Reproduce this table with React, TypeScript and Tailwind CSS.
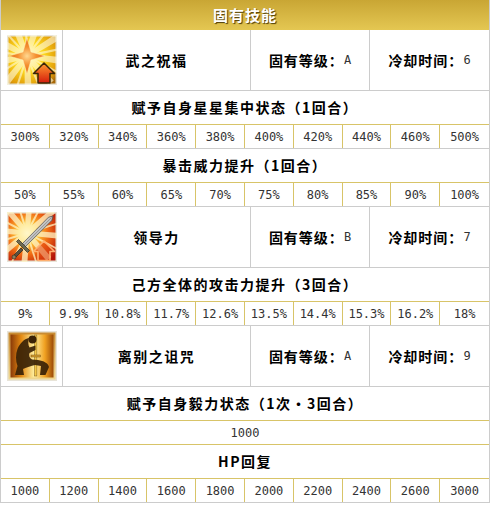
import React from "react";

const cjk = "font-['Noto_Sans_CJK_SC',sans-serif]";
const mono = "font-['DejaVu_Sans_Mono',monospace]";

function StarIcon() {
  const rays = Array.from({ length: 18 }, (_, i) => i * 20);
  return (
    <svg width="50" height="50" viewBox="0 0 50 50">
      <defs>
        <radialGradient id="s1bg" cx="0.42" cy="0.42" r="0.75">
          <stop offset="0" stopColor="#fff6b0" />
          <stop offset="0.4" stopColor="#ffdc20" />
          <stop offset="0.85" stopColor="#e09a08" />
          <stop offset="1" stopColor="#a86808" />
        </radialGradient>
        <linearGradient id="s1ar" x1="0" y1="0" x2="0" y2="1">
          <stop offset="0" stopColor="#ff9a30" />
          <stop offset="1" stopColor="#d41c0c" />
        </linearGradient>
        <radialGradient id="s1st" cx="0.5" cy="0.5" r="0.5">
          <stop offset="0" stopColor="#ffd890" />
          <stop offset="0.5" stopColor="#f59030" />
          <stop offset="1" stopColor="#e46a14" />
        </radialGradient>
      </defs>
      <rect x="0" y="0" width="50" height="50" fill="#e8e4d8" />
      <rect x="1.5" y="1.5" width="47" height="47" fill="url(#s1bg)" />
      <g transform="translate(20 21)" opacity="0.6">
        {rays.map((a, i) => (
          <polygon
            key={a}
            points={i % 2 ? "0,-1.2 36,-1 36,1 0,1.2" : "0,-2.5 36,-3.5 36,3.5 0,2.5"}
            fill="#fffbe0"
            transform={`rotate(${a + 8})`}
          />
        ))}
      </g>
      <polygon points="20,3 24,17 38,21 24,25 20,39 16,25 2,21 16,17" fill="url(#s1st)" stroke="#fff0b8" strokeWidth="0.5" />
      <polygon points="37,28 47.5,38.5 43,38.5 43,48 31,48 31,38.5 26.5,38.5" fill="url(#s1ar)" stroke="#3a2608" strokeWidth="1.5" strokeLinejoin="round" />
    </svg>
  );
}

function SwordIcon() {
  const rays = Array.from({ length: 16 }, (_, i) => i * 22.5);
  return (
    <svg width="50" height="50" viewBox="0 0 50 50">
      <defs>
        <radialGradient id="s2bg" cx="0.4" cy="0.42" r="0.75">
          <stop offset="0" stopColor="#fffbd0" />
          <stop offset="0.25" stopColor="#ffd23a" />
          <stop offset="0.6" stopColor="#f06a14" />
          <stop offset="1" stopColor="#b41408" />
        </radialGradient>
        <linearGradient id="s2bl" x1="0" y1="0" x2="1" y2="1">
          <stop offset="0" stopColor="#f8f8f8" />
          <stop offset="1" stopColor="#8a8a8a" />
        </linearGradient>
      </defs>
      <rect x="0" y="0" width="50" height="50" fill="#e8e4d8" />
      <rect x="1.5" y="1.5" width="47" height="47" fill="url(#s2bg)" />
      <g transform="translate(20 21)" opacity="0.75">
        {rays.map((a, i) => (
          <polygon
            key={a}
            points={i % 2 ? "0,-1.2 34,-0.8 34,0.8 0,1.2" : "0,-2.5 34,-3 34,3 0,2.5"}
            fill="#fff6c8"
            transform={`rotate(${a + 5})`}
          />
        ))}
      </g>
      <polygon points="46,4 44.8,8.5 17.5,35.5 14.5,32.5 41.5,5.2" fill="url(#s2bl)" stroke="#4a4a4a" strokeWidth="0.7" />
      <line x1="44.5" y1="5.5" x2="16" y2="34" stroke="#707070" strokeWidth="0.5" />
      <polygon points="9.5,29.5 11.5,27.5 22.5,38.5 20.5,40.5" fill="#6e6a52" stroke="#2a2a20" strokeWidth="0.7" />
      <polygon points="14,36 16,38 9,45 7,43" fill="#5a5040" stroke="#2a2a20" strokeWidth="0.7" />
      <circle cx="7" cy="45" r="2" fill="#8a8060" stroke="#2a2a20" strokeWidth="0.6" />
      <polygon points="37,29 47.5,39.5 43,39.5 43,48.5 31,48.5 31,39.5 26.5,39.5" fill="#e04010" fillOpacity="0.5" stroke="#ffb070" strokeWidth="1.6" strokeLinejoin="round" />
    </svg>
  );
}

function KneelIcon() {
  return (
    <svg width="50" height="50" viewBox="0 0 50 50">
      <defs>
        <linearGradient id="s3bg" x1="0" y1="0" x2="1" y2="0">
          <stop offset="0" stopColor="#8a3a08" />
          <stop offset="0.25" stopColor="#e48a12" />
          <stop offset="0.55" stopColor="#fff0a0" />
          <stop offset="0.8" stopColor="#f0a020" />
          <stop offset="1" stopColor="#9a4a08" />
        </linearGradient>
        <linearGradient id="s3fr" x1="0" y1="0" x2="0" y2="1">
          <stop offset="0" stopColor="#c88a30" />
          <stop offset="1" stopColor="#f0d890" />
        </linearGradient>
      </defs>
      <rect x="0" y="0" width="50" height="50" fill="#e8e4d8" />
      <rect x="1.5" y="1.5" width="47" height="47" fill="url(#s3fr)" />
      <rect x="3.5" y="3.5" width="43" height="43" fill="url(#s3bg)" />
      <rect x="27.5" y="4" width="2.4" height="41" fill="#f4c848" stroke="#6a4410" strokeWidth="0.4" />
      <rect x="24" y="24" width="9.5" height="2" fill="#d8a030" stroke="#5a3808" strokeWidth="0.4" />
      <path
        d="M22 7 C17 8 13 12 10.5 18 C8.5 23 8.5 30 10.5 35 L8 44 L17 44 L16 38 C20 36 24 35 28 34 L34 35 L33 44 L38.5 44 L42 36 C41 32 37 30 31 29 L25 28.5 C22.5 27 21.5 24.5 22.5 22 L28.5 19 L28.5 14.5 L22.5 16.5 C21 14 21 11 22 7 Z"
        fill="#3a2206"
        opacity="0.93"
      />
      <circle cx="25.5" cy="8.5" r="4" fill="#3a2206" />
    </svg>
  );
}

function SkillRow({ icon, name, grade, cd }: { icon: React.ReactNode; name: string; grade: string; cd: string }) {
  return (
    <div className="flex h-[61px] border-b border-[#cccccc]">
      <div className="flex w-[62px] items-center justify-center border-r border-[#cccccc]">{icon}</div>
      <div className={`flex w-[188px] items-center justify-center border-r border-[#cccccc] text-[14px] font-bold tracking-[1.5px] ${cjk}`}>
        {name}
      </div>
      <div className="flex w-[119px] items-center justify-center border-r border-[#cccccc]">
        <span className={`text-[14px] font-bold tracking-[1px] ${cjk}`}>固有等级：</span>
        <span className={`text-[12px] text-[#333] ${mono}`}>{grade}</span>
      </div>
      <div className="flex flex-1 items-center justify-center">
        <span className={`text-[14px] font-bold tracking-[1px] ${cjk}`}>冷却时间：</span>
        <span className={`text-[12px] text-[#333] ${mono}`}>{cd}</span>
      </div>
    </div>
  );
}

function EffectRow({ text }: { text: string }) {
  return (
    <div className={`flex h-[34px] items-center justify-center border-b border-[#d8c468] text-[14px] font-bold tracking-[1.5px] ${cjk}`}>
      {text}
    </div>
  );
}

function ValuesRow({ values }: { values: string[] }) {
  return (
    <div className="grid h-[24px] grid-cols-10 border-b border-[#cccccc]">
      {values.map((v, i) => (
        <div
          key={i}
          className={`flex items-center justify-center text-[12px] text-[#333] ${mono} ${i < 9 ? "border-r border-[#d8c468]" : ""}`}
        >
          {v}
        </div>
      ))}
    </div>
  );
}

export default function App() {
  return (
    <div className="min-h-screen bg-white">
      <div className="w-[490px] border-x border-[#cccccc] text-black">
        {/* Header */}
        <div className="flex h-[30px] items-center justify-center bg-gradient-to-b from-[#c9a634] to-[#e4c752]">
          <span className={`text-[15px] font-bold tracking-[1px] text-white [text-shadow:1px_1px_1px_#4a3a08] ${cjk}`}>固有技能</span>
        </div>

        <SkillRow icon={<StarIcon />} name="武之祝福" grade="A" cd="6" />
        <EffectRow text="赋予自身星星集中状态（1回合）" />
        <ValuesRow values={["300%", "320%", "340%", "360%", "380%", "400%", "420%", "440%", "460%", "500%"]} />
        <EffectRow text="暴击威力提升（1回合）" />
        <ValuesRow values={["50%", "55%", "60%", "65%", "70%", "75%", "80%", "85%", "90%", "100%"]} />

        <SkillRow icon={<SwordIcon />} name="领导力" grade="B" cd="7" />
        <EffectRow text="己方全体的攻击力提升（3回合）" />
        <ValuesRow values={["9%", "9.9%", "10.8%", "11.7%", "12.6%", "13.5%", "14.4%", "15.3%", "16.2%", "18%"]} />

        <SkillRow icon={<KneelIcon />} name="离别之诅咒" grade="A" cd="9" />
        <EffectRow text="赋予自身毅力状态（1次·3回合）" />
        <div className={`flex h-[24px] items-center justify-center border-b border-[#d8c468] text-[12px] text-[#333] ${mono}`}>1000</div>
        <EffectRow text="HP回复" />
        <ValuesRow values={["1000", "1200", "1400", "1600", "1800", "2000", "2200", "2400", "2600", "3000"]} />
      </div>
    </div>
  );
}
